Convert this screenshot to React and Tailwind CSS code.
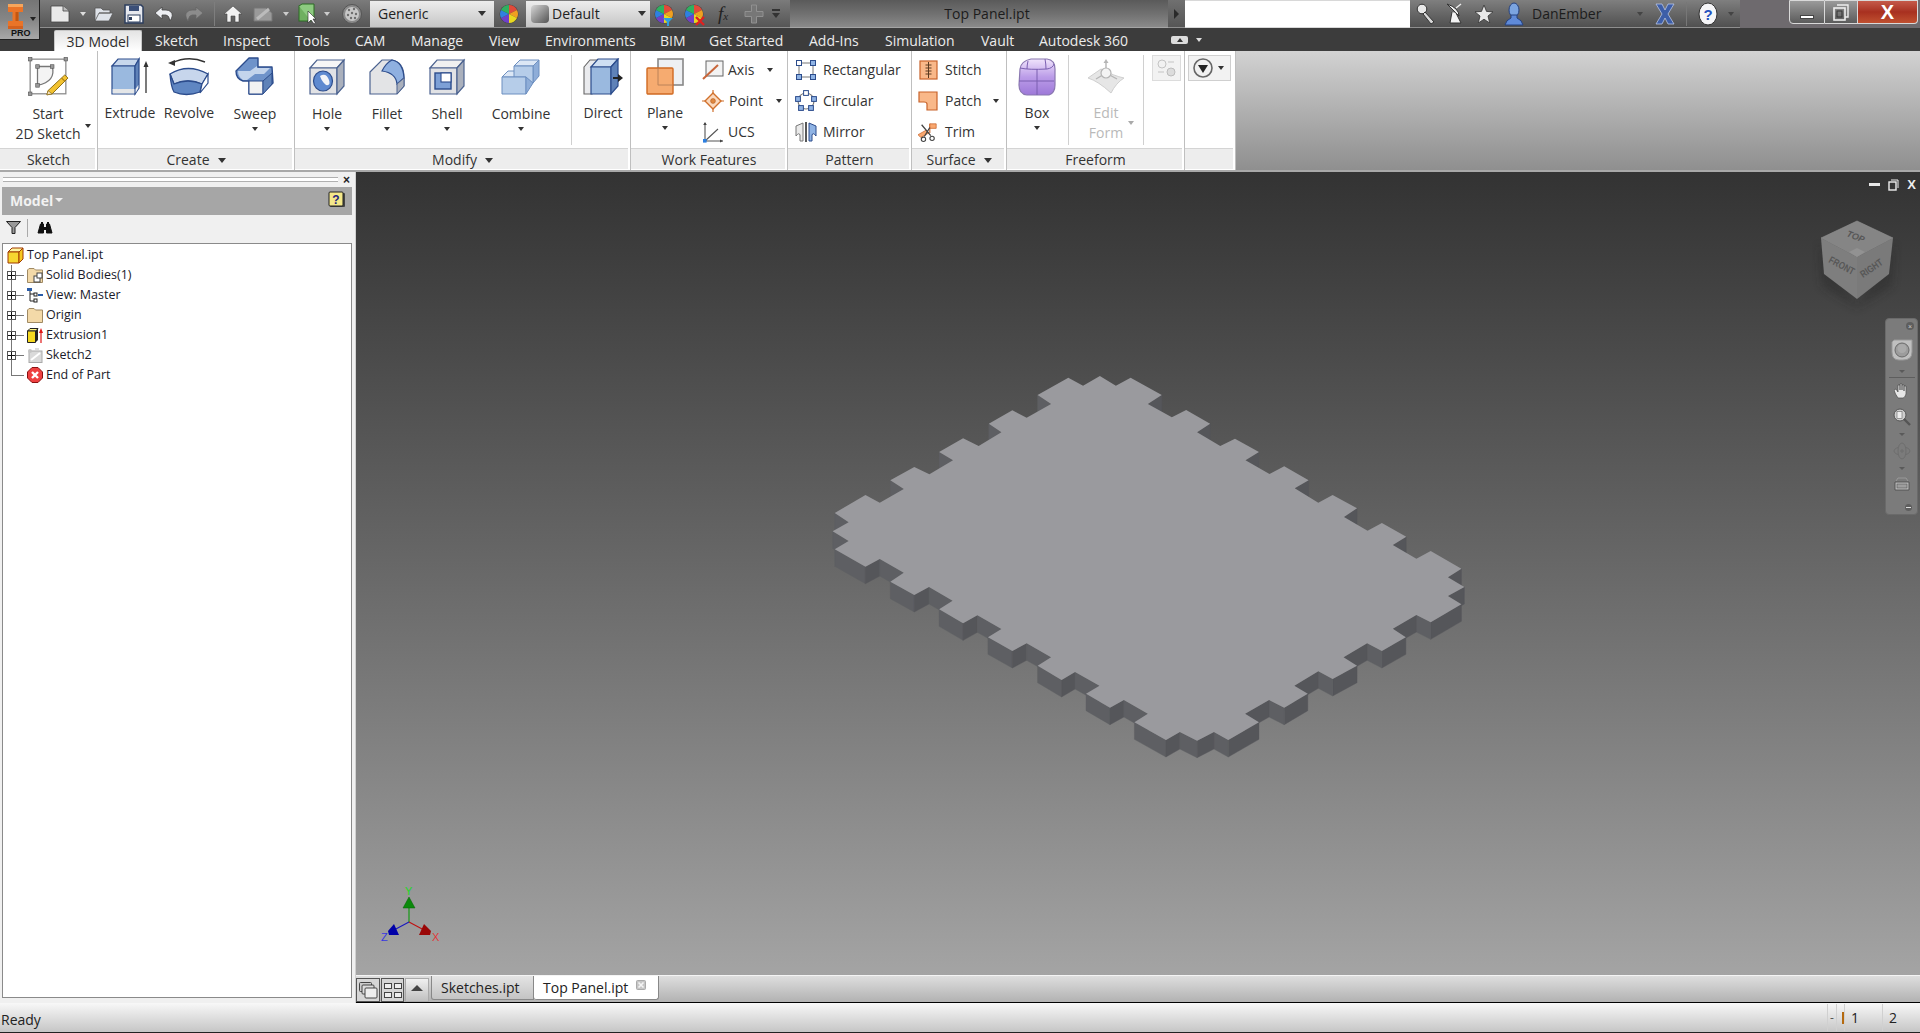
import React from 'react';

// top face of the plate, traced off the reference (660x410 crop, x scaled 2.376, y scaled 3)
const RAW = '517,105 590,53 625,77 665,48 703,77 738,53 812,105 779,132 836,172 870,150 927,191 896,217 951,258 986,236 1043,276 1011,301 1068,342 1103,319 1161,361 1128,385 1184,428 1218,405 1276,445 1245,471 1301,512 1335,489 1393,530 1361,555 1417,596 1451,573 1524,626 1492,652 1531,681 1492,708 1524,733 1451,787 1417,765 1361,806 1392,832 1335,873 1300,850 1244,892 1276,917 1218,957 1184,934 1127,977 1159,1001 1103,1043 1067,1020 1010,1061 1043,1087 970,1140 936,1116 896,1142 855,1116 822,1140 747,1087 779,1061 722,1020 689,1043 632,1001 664,977 606,936 574,960 517,917 549,892 491,850 457,873 399,832 431,807 374,766 340,790 283,748 315,722 259,681 224,705 167,665 199,638 142,597 108,620 35,568 68,543 30,514 68,487 35,459 108,405 142,428 199,387 167,361 224,321 260,343 316,301 283,276 340,235 377,258 431,217 401,191 457,151 491,173 549,132';
const PLATE = RAW.split(' ').map((p) => {
  const [x, y] = p.split(',').map(Number);
  return [x / 2.376, y / 3];
});
const DEPTH = 17;

function Plate() {
  const walls = [];
  PLATE.forEach((p, i) => {
    const q = PLATE[(i + 1) % PLATE.length];
    if (q[0] < p[0]) walls.push({ p, q, my: (p[1] + q[1]) / 2, fill: q[1] > p[1] ? '#55565a' : '#5e5f63' });
  });
  walls.sort((a, b) => a.my - b.my);
  return (
    <svg width="660" height="410" className="absolute left-[464px] top-[188px]">
      {walls.map((w, i) => (
        <polygon
          key={i}
          fill={w.fill}
          stroke={w.fill}
          strokeWidth="0.4"
          points={`${w.p[0]},${w.p[1]} ${w.q[0]},${w.q[1]} ${w.q[0]},${w.q[1] + DEPTH} ${w.p[0]},${w.p[1] + DEPTH}`}
        />
      ))}
      <polygon fill="#9a9a9e" points={PLATE.map((p) => p.join(',')).join(' ')} />
    </svg>
  );
}

const Chev = ({ className = '', color = 'border-t-[#333]' }) => (
  <span className={`inline-block w-0 h-0 border-x-[3.5px] border-x-transparent border-t-[4px] ${color} ${className}`} />
);

const OUT = '#2c4c8c';

const SketchIcon = () => (
  <svg width="42" height="42" viewBox="0 0 40 40">
    <rect x="3" y="3" width="34" height="33" fill="none" stroke="#8a8a8a" strokeWidth="1.2" />
    <path d="M10 10H24Q28 24 10 28Z" fill="#f4f4f4" stroke="#777" strokeWidth="1.2" />
    {[[3, 3], [37, 3], [3, 36], [10, 10], [24, 10], [10, 28]].map(([x, y], i) => (
      <rect key={i} x={x - 1.7} y={y - 1.7} width="3.4" height="3.4" fill="#999" stroke="#555" strokeWidth=".6" />
    ))}
    <path d="M20 33l16-15 3 3-15 15-5 1z" fill="#f2c230" stroke="#8a6a10" strokeWidth=".9" />
    <path d="M20 33l-1 4 5-1z" fill="#f6e2c0" stroke="#8a6a10" strokeWidth=".6" />
    <path d="M33 21l3 3" stroke="#a87a10" strokeWidth="1" />
  </svg>
);
const ExtrudeIcon = () => (
  <svg width="40" height="40" viewBox="0 0 40 40">
    <path d="M2 9L8 2H29L25 9Z" fill="#c7d7ec" stroke={OUT} strokeWidth="1.2" />
    <path d="M2 9H25V37H2Z" fill="#9ab9df" stroke={OUT} strokeWidth="1.2" />
    <path d="M25 9L29 2V31L25 37Z" fill="#5f82b8" stroke={OUT} strokeWidth="1.2" />
    <path d="M2.6 32H24.4V36.4H2.6Z" fill="#e4e6e8" />
    <path d="M25.6 32L28.4 28V31L25.6 36Z" fill="#f2f2f2" />
    <path d="M36 36V6" stroke="#333" strokeWidth="1.3" />
    <path d="M33.5 10L36 4L38.5 10Z" fill="#333" />
  </svg>
);
const RevolveIcon = () => (
  <svg width="42" height="40" viewBox="0 0 42 40">
    <path d="M4 6Q20 -2 37 5" fill="none" stroke="#333" strokeWidth="1.4" />
    <path d="M0 6L7 3V9Z" fill="#333" />
    <path d="M2 17Q20 6 40 17L34 27Q20 21 6 27Z" fill="#c7d6ec" stroke={OUT} strokeWidth="1.3" />
    <path d="M2 17Q3 30 6 35Q18 40 32 35L34 27Q20 21 6 27Z" fill="#5f86c2" stroke={OUT} strokeWidth="1.3" />
    <path d="M34 27L40 17V26L32 36Z" fill="#fff" stroke={OUT} strokeWidth="1.2" />
  </svg>
);
const SweepIcon = () => (
  <svg width="40" height="40" viewBox="0 0 40 40">
    <path d="M1 14L14 1H23V10H37L38 26L27 37H14V24H8Q1 22 1 14Z" fill="#6f93ca" stroke={OUT} strokeWidth="1.4" strokeLinejoin="round" />
    <path d="M3 14H15L22 9V11H35L29 17H20L12 23H8Q3 20 3 14Z" fill="#c3d4ec" />
    <path d="M14 24H28V37H14Z" fill="#f2f2f2" stroke={OUT} strokeWidth="1" />
    <path d="M28 24L37 16V27L28 37Z" fill="#5f82b8" stroke={OUT} strokeWidth="1" />
  </svg>
);
const HoleIcon = () => (
  <svg width="38" height="38" viewBox="0 0 38 38">
    <path d="M2 10L9 2H36L29 10Z" fill="#f6f6f6" stroke="#4c6390" strokeWidth="1.2" />
    <path d="M2 10H29V36H2Z" fill="#e1e2e5" stroke="#4c6390" strokeWidth="1.2" />
    <path d="M29 10L36 2V28L29 36Z" fill="#aab0bc" stroke="#4c6390" strokeWidth="1.2" />
    <ellipse cx="15" cy="23" rx="9.5" ry="10" fill="#5f8ad0" stroke={OUT} strokeWidth="1.2" />
    <path d="M12 18Q18 14 21 22Q23 28 18 27Q14 24 12 18Z" fill="#f2f4f8" />
  </svg>
);
const FilletIcon = () => (
  <svg width="38" height="38" viewBox="0 0 38 38">
    <path d="M2 14L14 2H24Q36 4 36 20V28L29 36H2Z" fill="#e3e4e6" stroke="#4c6390" strokeWidth="1.2" />
    <path d="M14 13Q18 5 24 2Q35 4 36 20L29 26Q28 15 14 13Z" fill="#8fb0e0" stroke={OUT} strokeWidth="1.2" />
    <path d="M29 26L36 20V28L29 36Z" fill="#aab0bc" stroke="#4c6390" strokeWidth="1" />
  </svg>
);
const ShellIcon = () => (
  <svg width="38" height="38" viewBox="0 0 38 38">
    <path d="M2 10L9 2H36L29 10Z" fill="#f0f0f0" stroke="#4c6390" strokeWidth="1.2" />
    <path d="M2 10H29V36H2Z" fill="#e1e2e5" stroke="#4c6390" strokeWidth="1.2" />
    <path d="M29 10L36 2V28L29 36Z" fill="#aab0bc" stroke="#4c6390" strokeWidth="1.2" />
    <rect x="7" y="15" width="16" height="16" fill="#7da0d6" stroke={OUT} strokeWidth="1.4" />
    <rect x="13" y="15" width="10" height="9" fill="#fff" stroke={OUT} strokeWidth="1.1" />
  </svg>
);
const CombineIcon = () => (
  <svg width="40" height="40" viewBox="0 0 40 40">
    <path d="M13 9L19 3H38L32 9Z" fill="#dce7f5" stroke="#6d8fc0" strokeWidth="1" />
    <path d="M32 9L38 3V19L32 26Z" fill="#8eadd8" stroke="#6d8fc0" strokeWidth="1" />
    <path d="M1 20L7 14H25V20Z" fill="#dce7f5" stroke="#6d8fc0" strokeWidth="1" />
    <path d="M13 9H32V26L25 30V20H13Z" fill="#b6cde9" stroke="#6d8fc0" strokeWidth="1" />
    <path d="M1 20H25V37H1Z" fill="#b6cde9" stroke="#6d8fc0" strokeWidth="1" />
    <path d="M25 20L32 26L25 37Z" fill="#8eadd8" stroke="#6d8fc0" strokeWidth="1" />
  </svg>
);
const DirectIcon = () => (
  <svg width="40" height="38" viewBox="0 0 40 38">
    <path d="M1 9L7 2H15L9 9V36H1Z" fill="#eaebee" stroke="#666" strokeWidth="1.1" />
    <path d="M8 9L15 1H35L28 9Z" fill="#cfdff2" stroke={OUT} strokeWidth="1.2" />
    <path d="M8 9H28V36H8Z" fill="#9ab9df" stroke={OUT} strokeWidth="1.2" />
    <path d="M28 9L35 1V28L28 36Z" fill="#5f82b8" stroke={OUT} strokeWidth="1.2" />
    <path d="M30 20H37" stroke="#222" strokeWidth="2" />
    <path d="M35 16L40 20L35 24Z" fill="#222" />
  </svg>
);
const PlaneIcon = () => (
  <svg width="40" height="38" viewBox="0 0 40 38">
    <rect x="13" y="1" width="25" height="26" fill="#eef0f3" stroke="#888" strokeWidth="1.6" />
    <rect x="2" y="10" width="26" height="26" rx="1" fill="#f6a668" fillOpacity=".95" stroke="#d06a22" strokeWidth="1.4" />
    <path d="M13 10V27H28" fill="none" stroke="#b5815a" strokeWidth=".8" />
  </svg>
);
const AxisIcon = () => (
  <svg width="22" height="22" viewBox="0 0 22 22">
    <rect x="4" y="2" width="17" height="15" fill="#f3f3f3" stroke="#666" />
    <path d="M1 20L16 6" stroke="#c8663a" strokeWidth="2" />
  </svg>
);
const PointIcon = () => (
  <svg width="22" height="22" viewBox="0 0 22 22">
    <path d="M11 3L19 11L11 19L3 11Z" fill="#fbd9bd" stroke="#d0702c" strokeWidth="1.4" />
    <circle cx="11" cy="11" r="2.4" fill="#e08840" stroke="#b05a20" strokeWidth=".6" />
    <path d="M11 0V4M11 18V22M0 11H4M18 11H22" stroke="#d0702c" strokeWidth="1.2" />
  </svg>
);
const UcsIcon = () => (
  <svg width="22" height="22" viewBox="0 0 22 22">
    <path d="M3 20V2M3 20H21M3 20L16 8" stroke="#555" strokeWidth="1.1" fill="none" />
    <path d="M1.2 4L3 1L4.8 4Z" fill="#444" />
    <path d="M18 18.4L21 20L18 21.6Z" fill="#444" />
    <rect x="1" y="18" width="3.6" height="3.6" fill="#2c7fe0" />
  </svg>
);
const RectIcon = () => (
  <svg width="22" height="22" viewBox="0 0 22 22">
    <path d="M4 4H18V18H4Z" fill="none" stroke="#777" />
    <rect x="1.5" y="1.5" width="5" height="5" fill="#fff" stroke="#2c4c8c" />
    <rect x="15.5" y="1.5" width="5" height="5" fill="#8fb3e4" stroke="#2c4c8c" />
    <rect x="1.5" y="15.5" width="5" height="5" fill="#8fb3e4" stroke="#2c4c8c" />
    <rect x="15.5" y="15.5" width="5" height="5" fill="#8fb3e4" stroke="#2c4c8c" />
  </svg>
);
const CircIcon = () => (
  <svg width="22" height="22" viewBox="0 0 22 22">
    <circle cx="11" cy="11" r="8" fill="none" stroke="#777" strokeWidth="1.2" />
    {[[11, 3], [3, 9], [19, 9], [6, 18], [16, 18]].map(([x, y], i) => (
      <rect key={i} x={x - 2.4} y={y - 2.4} width="4.8" height="4.8" fill={i === 0 ? '#fff' : '#8fb3e4'} stroke="#2c4c8c" />
    ))}
  </svg>
);
const MirrorIcon = () => (
  <svg width="22" height="22" viewBox="0 0 22 22">
    <path d="M1 5L8 2V20H5V14Q4 11 1 15Z" fill="#eaeaea" stroke="#777" />
    <path d="M21 5L14 2V20H17V14Q18 11 21 15Z" fill="#8fb3e4" stroke="#2c4c8c" />
    <path d="M11 1V21" stroke="#111" strokeWidth="1.4" />
  </svg>
);
const StitchIcon = () => (
  <svg width="19" height="20" viewBox="0 0 19 20">
    <rect x="1" y="1" width="17" height="18" fill="#f9b889" stroke="#c8632a" strokeWidth="1.2" />
    <path d="M9.5 2V18M6.5 5H12.5M6.5 8H12.5M6.5 11H12.5M6.5 14H12.5" stroke="#5a3a20" strokeWidth="1" />
  </svg>
);
const PatchIcon = () => (
  <svg width="20" height="20" viewBox="0 0 20 20">
    <path d="M1 1H19V19H9V13Q9 11 6 11H1Z" fill="#f9b889" stroke="#c8632a" strokeWidth="1.2" />
  </svg>
);
const TrimIcon = () => (
  <svg width="22" height="22" viewBox="0 0 22 22">
    <path d="M13 2V12" stroke="#c8632a" strokeWidth="1.2" />
    <path d="M13 2H20V7H13Z" fill="#f9a870" stroke="#c8632a" strokeWidth=".8" />
    <path d="M0 14L9 9L12 12L3 17Z" fill="#f9a870" stroke="#c8632a" strokeWidth=".8" />
    <path d="M4 3L14 15M13 6L7 16" stroke="#444" strokeWidth="1.4" />
    <circle cx="6" cy="19" r="2.4" fill="none" stroke="#444" strokeWidth="1.2" />
    <circle cx="15.5" cy="18" r="2.4" fill="none" stroke="#444" strokeWidth="1.2" />
  </svg>
);
const BoxIcon = () => (
  <svg width="40" height="40" viewBox="0 0 40 40">
    <defs>
      <linearGradient id="boxg" x1="0" y1="0" x2="0" y2="1">
        <stop offset="0" stopColor="#f0e4fc" />
        <stop offset=".5" stopColor="#bb9ce8" />
        <stop offset="1" stopColor="#9d78d8" />
      </linearGradient>
    </defs>
    <path d="M3 12Q4 4 14 2H30Q38 3 38 12V28Q38 36 32 38H10Q2 37 2 28Z" fill="url(#boxg)" stroke="#8a78b0" strokeWidth="1.2" />
    <path d="M3 11Q12 13 30 12Q36 11 37 7M2 24H37M20 12V38M11 4Q10 8 10 12M28 2Q29 7 29 12" fill="none" stroke="#7a5fb0" strokeWidth="1" />
  </svg>
);
const EditFormIcon = () => (
  <svg width="40" height="36" viewBox="0 0 40 36">
    <path d="M2 19L15 10Q28 17 38 19Q30 24 25 34Q12 22 2 19Z" fill="#e6e6e6" stroke="#cfcfcf" />
    <path d="M20 2V14M20 14L10 20M20 14L31 20" stroke="#b5b5b5" strokeWidth="1.4" />
    <circle cx="20" cy="14" r="5" fill="#f4f4f4" stroke="#b5b5b5" strokeWidth="1.2" />
    <path d="M17.5 4L20 0L22.5 4Z" fill="#b5b5b5" />
  </svg>
);

const Big = ({ w, icon, lines, chev, gray, down }) => (
  <div className={`${w} shrink-0 flex flex-col items-center pt-[6px]`}>
    <div className="h-[40px] flex items-center justify-center">{icon}</div>
    <div className={`${down ? 'mt-[7px]' : 'mt-[6px]'} flex flex-col items-center leading-[20px] ${gray ? 'text-[#b9b9b9]' : 'text-[#333]'}`}>
      {lines.map((l) => (
        <span key={l} className="whitespace-nowrap">{l}</span>
      ))}
    </div>
    {chev && <Chev className="mt-[3px]" />}
  </div>
);

const Small = ({ icon, label, iw, gap, chev, chevClass = '' }) => (
  <div className="h-[31px] flex items-center">
    <span className={`${iw} shrink-0 flex items-center justify-center`}>{icon}</span>
    <span className={`${gap} whitespace-nowrap text-[#333]`}>{label}</span>
    {chev && <Chev className={chevClass} />}
  </div>
);

const Panel = ({ w, title, chev, children }) => (
  <div className={`${w} h-[119px] flex flex-col border-r border-[#bfbfbf] bg-white`}>
    <div className="h-[97px] flex">{children}</div>
    <div className="h-[21px] mr-[2px] pl-[2px] pt-[2px] bg-[#ededed] border-t border-[#d4d4d4] flex items-center justify-center leading-none text-[#333]">
      {title && <span>{title}</span>}
      {chev && <Chev className="ml-[8px] border-x-[4.5px] border-t-[5px]" />}
    </div>
  </div>
);

const Sep = ({ className = '' }) => <div className={`w-px h-[90px] mt-[4px] bg-[#d0d0d0] shrink-0 ${className}`} />;

const Ribbon = () => (
  <div className="h-[121px] flex border-b-2 border-[#a8a8a8] text-[14px]">
    <Panel w="w-[98px]" title="Sketch">
      <div className="relative">
        <Big w="w-[96px]" icon={<SketchIcon />} lines={['Start', '2D Sketch']} down />
        <Chev className="absolute left-[85px] top-[73px]" />
      </div>
    </Panel>
    <Panel w="w-[197px]" title="Create" chev>
      <Big w="w-[64px]" icon={<ExtrudeIcon />} lines={['Extrude']} />
      <Big w="w-[54px]" icon={<RevolveIcon />} lines={['Revolve']} />
      <Big w="w-[78px]" icon={<SweepIcon />} lines={['Sweep']} chev down />
    </Panel>
    <Panel w="w-[336px]" title="Modify" chev>
      <Big w="w-[64px]" icon={<HoleIcon />} lines={['Hole']} chev down />
      <Big w="w-[56px]" icon={<FilletIcon />} lines={['Fillet']} chev down />
      <Big w="w-[64px]" icon={<ShellIcon />} lines={['Shell']} chev down />
      <Big w="w-[84px]" icon={<CombineIcon />} lines={['Combine']} chev down />
      <Sep className="ml-[8px]" />
      <div className="pl-[4px]">
        <Big w="w-[54px]" icon={<DirectIcon />} lines={['Direct']} />
      </div>
    </Panel>
    <Panel w="w-[157px]" title="Work Features">
      <Big w="w-[68px]" icon={<PlaneIcon />} lines={['Plane']} chev />
      <div className="ml-[3px] pt-[3px] flex flex-col">
        <Small icon={<AxisIcon />} label="Axis" iw="w-[22px]" gap="ml-[4px]" chev chevClass="ml-[13px]" />
        <Small icon={<PointIcon />} label="Point" iw="w-[22px]" gap="ml-[5px]" chev chevClass="ml-[13px]" />
        <Small icon={<UcsIcon />} label="UCS" iw="w-[22px]" gap="ml-[4px]" />
      </div>
    </Panel>
    <Panel w="w-[124px]" title="Pattern">
      <div className="ml-[7px] pt-[3px] flex flex-col">
        <Small icon={<RectIcon />} label="Rectangular" iw="w-[22px]" gap="ml-[6px]" />
        <Small icon={<CircIcon />} label="Circular" iw="w-[22px]" gap="ml-[6px]" />
        <Small icon={<MirrorIcon />} label="Mirror" iw="w-[22px]" gap="ml-[6px]" />
      </div>
    </Panel>
    <Panel w="w-[95px]" title="Surface" chev>
      <div className="ml-[6px] pt-[3px] flex flex-col">
        <Small icon={<StitchIcon />} label="Stitch" iw="w-[20px]" gap="ml-[7px]" />
        <Small icon={<PatchIcon />} label="Patch" iw="w-[20px]" gap="ml-[7px]" chev chevClass="ml-[12px]" />
        <Small icon={<TrimIcon />} label="Trim" iw="w-[20px]" gap="ml-[7px]" />
      </div>
    </Panel>
    <Panel w="w-[178px]" title="Freeform">
      <Big w="w-[60px]" icon={<BoxIcon />} lines={['Box']} chev />
      <Sep className="ml-[1px]" />
      <div className="relative">
        <Big w="w-[74px]" icon={<EditFormIcon />} lines={['Edit', 'Form']} gray />
        <Chev className="absolute left-[59px] top-[70px]" color="border-t-[#aaa]" />
      </div>
      <Sep />
      <div className="ml-[8px] mt-[4px] w-[29px] h-[26px] border border-[#dcdcdc] bg-[#f2f2f2] flex items-center justify-center">
        <svg width="21" height="18" viewBox="0 0 21 18">
          <ellipse cx="6" cy="5" rx="4" ry="4" fill="none" stroke="#c4c4c4" />
          <ellipse cx="15" cy="13" rx="4" ry="4" fill="#dcdcdc" stroke="#bcbcbc" />
          <path d="M12 3H18M2 13H8" stroke="#c4c4c4" />
        </svg>
      </div>
    </Panel>
    <Panel w="w-[51px]">
      <div className="ml-[3px] mt-[4px] w-[43px] h-[26px] border border-[#cfcfcf] bg-[#f2f2f2] flex items-center">
        <svg width="22" height="22" viewBox="0 0 22 22" className="ml-[3px]">
          <circle cx="11" cy="11" r="9" fill="#f0f0f0" stroke="#666" strokeWidth="1.6" />
          <path d="M6 8H16L11 16Z" fill="#222" />
        </svg>
        <Chev className="ml-[4px]" />
      </div>
    </Panel>
    <div className="flex-1 bg-gradient-to-b from-[#d2d2d2] to-[#8f8f8f]" />
  </div>
);

const Doc = () => (
  <svg width="20" height="18" viewBox="0 0 20 18" className="ml-[10px]">
    <path d="M1 1H13L19 6V17H1Z" fill="#e9e9e9" stroke="#444" strokeWidth=".8" />
    <path d="M13 1V6H19" fill="#bbb" stroke="#444" strokeWidth=".8" />
  </svg>
);

const QuickAccess = () => (
  <div className="w-[790px] h-[28px] pl-[40px] flex items-center bg-gradient-to-b from-[#7b7b7b] to-[#565656] border-b border-[#8e8e8e] shrink-0">
    <Doc />
    <Chev className="ml-[10px]" color="border-t-[#ddd]" />
    <svg width="20" height="16" viewBox="0 0 20 16" className="ml-[8px]">
      <path d="M1 15V2H7L9 4H16V7H5L1 15H15L19 7H5" fill="#dfe3ea" stroke="#555" strokeWidth=".8" />
    </svg>
    <svg width="20" height="20" viewBox="0 0 20 20" className="ml-[10px]">
      <path d="M1 1H17L19 3V19H1Z" fill="#e6e8ee" stroke="#2d3e5e" strokeWidth="1.5" />
      <rect x="5" y="2" width="10" height="5" fill="#3b4f78" />
      <rect x="4" y="11" width="12" height="7" fill="#fff" stroke="#2d3e5e" />
      <rect x="5" y="13" width="3" height="3" fill="#2d3e5e" />
    </svg>
    <svg width="20" height="16" viewBox="0 0 20 16" className="ml-[10px]">
      <path d="M8 1L1 7L8 13V9H12Q15 9 16 15Q20 9 17 6Q15 4 12 4H8Z" fill="#eceef2" stroke="#444" strokeWidth=".8" />
    </svg>
    <svg width="19" height="16" viewBox="0 0 19 16" className="ml-[11px]">
      <path d="M11 1L18 7L11 13V9H7Q4 9 3 15Q-1 9 2 6Q4 4 7 4H11Z" fill="#8c8c8c" stroke="#666" strokeWidth=".8" />
    </svg>
    <div className="ml-[10px] w-px h-[24px] bg-[#7e7e7e]" />
    <svg width="18" height="18" viewBox="0 0 18 18" className="ml-[9px]">
      <path d="M9 1L18 9H15V17H11V11H7V17H3V9H0Z" fill="#f2f2f2" stroke="#444" strokeWidth=".6" />
    </svg>
    <svg width="20" height="18" viewBox="0 0 20 18" className="ml-[11px]">
      <path d="M1 3H13L19 8V16H1Z" fill="#9a9a9a" stroke="#777" />
      <path d="M4 14L16 4" stroke="#bbb" strokeWidth="3" />
    </svg>
    <Chev className="ml-[10px]" color="border-t-[#ccc]" />
    <svg width="18" height="22" viewBox="0 0 18 22" className="ml-[9px]">
      <rect x="1" y="3" width="12" height="15" fill="#6fb060" stroke="#2c6a24" />
      <path d="M1 3L4 1H16V15L13 18" fill="#8dca80" stroke="#2c6a24" />
      <path d="M10 8V20L13 17L16 21L17.5 20L15 16H18Z" fill="#fff" stroke="#222" strokeWidth=".6" />
    </svg>
    <Chev className="ml-[8px]" color="border-t-[#ccc]" />
    <svg width="20" height="20" viewBox="0 0 20 20" className="ml-[12px]">
      <circle cx="10" cy="10" r="9.5" fill="#8a8a8a" stroke="#555" />
      <circle cx="10" cy="10" r="7" fill="#c8c8c8" />
      {[[7, 6], [12, 5], [14, 10], [6, 11], [10, 9], [9, 14], [13, 14]].map(([x, y], i) => (
        <circle key={i} cx={x} cy={y} r="1.2" fill="#6e6e6e" />
      ))}
    </svg>
    <div className="ml-[8px] w-[124px] h-[26px] px-[8px] flex items-center justify-between bg-gradient-to-b from-[#ededed] to-[#c6c6c6] text-[14px] text-[#222]">
      <span>Generic</span>
      <Chev className="border-x-[4px] border-t-[5px]" />
    </div>
    <ColorWheel cls="ml-[5px]" />
    <div className="ml-[7px] w-[124px] h-[26px] pl-[5px] pr-[4px] flex items-center bg-gradient-to-b from-[#ededed] to-[#c6c6c6] text-[14px] text-[#222]">
      <span className="w-[18px] h-[18px] rounded-sm bg-gradient-to-br from-[#d8d8d8] to-[#555] mr-[3px]" />
      <span className="flex-1">Default</span>
      <Chev className="border-x-[4px] border-t-[5px]" />
    </div>
    <span className="relative ml-[4px]">
      <ColorWheel />
      <svg width="10" height="8" viewBox="0 0 10 8" className="absolute left-[9px] top-[14px]">
        <path d="M0 0H10L6 4V8H4V4Z" fill="#2f9de0" />
      </svg>
    </span>
    <span className="relative ml-[10px]">
      <ColorWheel />
      <svg width="10" height="10" viewBox="0 0 10 10" className="absolute left-[11px] top-[12px]">
        <path d="M1 1L9 9M9 1L1 9" stroke="#e02020" strokeWidth="2.4" />
      </svg>
    </span>
    <span className="ml-[14px] w-[16px] font-['Liberation_Serif',serif] italic text-[19px] leading-none text-[#222]">
      f<span className="text-[11px]">x</span>
    </span>
    <svg width="20" height="20" viewBox="0 0 20 20" className="ml-[10px]">
      <path d="M7.5 1H12.5V7.5H19V12.5H12.5V19H7.5V12.5H1V7.5H7.5Z" fill="#777" stroke="#919191" />
    </svg>
    <div className="ml-[8px] flex flex-col items-center gap-[2px]">
      <span className="w-[8px] h-[2px] bg-[#333]" />
      <Chev className="border-x-[4px] border-t-[5px]" />
    </div>
  </div>
);

const ColorWheel = ({ cls = '' }) => (
  <svg width="20" height="20" viewBox="0 0 20 20" className={`block ${cls}`}>
    <circle cx="10" cy="10" r="9.5" fill="#444" />
    <path d="M10 10V1A9 9 0 0 1 18 6Z" fill="#e04a3a" />
    <path d="M10 10L18 6A9 9 0 0 1 18 14Z" fill="#f0a020" />
    <path d="M10 10L18 14A9 9 0 0 1 10 19Z" fill="#e8d820" />
    <path d="M10 10V19A9 9 0 0 1 2 14Z" fill="#7040c8" />
    <path d="M10 10L2 14A9 9 0 0 1 2 6Z" fill="#2f80e0" />
    <path d="M10 10L2 6A9 9 0 0 1 10 1Z" fill="#30b060" />
  </svg>
);

const InfoIcons = () => (
  <div className="w-[330px] h-[28px] flex items-center bg-gradient-to-b from-[#7f7f7f] to-[#505050] border-b border-[#8e8e8e] shrink-0">
    <svg width="20" height="22" viewBox="0 0 20 22" className="ml-[6px]">
      <circle cx="6" cy="6" r="4.8" fill="#e8e8e8" stroke="#333" />
      <path d="M9 9L18 19L15 21L7 11Z" fill="#d8d8d8" stroke="#333" />
    </svg>
    <svg width="18" height="24" viewBox="0 0 18 24" className="ml-[9px]">
      <path d="M2 2Q14 6 14 14Z" fill="#eee" stroke="#333" />
      <path d="M7 10L5 21H16L11 11" fill="#f2f2f2" stroke="#333" />
      <path d="M11 6L16 2" stroke="#eee" strokeWidth="1.4" />
    </svg>
    <svg width="18" height="18" viewBox="0 0 18 18" className="ml-[12px]">
      <path d="M9 0L11.5 6.4L18 6.9L13 11L14.7 18L9 14.2L3.3 18L5 11L0 6.9L6.5 6.4Z" fill="#e8e8e8" stroke="#333" strokeWidth=".8" />
    </svg>
    <svg width="20" height="24" viewBox="0 0 20 24" className="ml-[11px]">
      <ellipse cx="10" cy="8" rx="5" ry="7" fill="#7ba4e0" stroke="#24407e" />
      <path d="M7 13V16Q2 18 1 23H19Q18 18 13 16V13Z" fill="#5f8ad8" stroke="#24407e" />
    </svg>
    <span className="ml-[8px] w-[70px] text-[14px] text-[#1c1c1c]">DanEmber</span>
    <Chev className="ml-[35px]" color="border-t-[#444]" />
    <svg width="20" height="22" viewBox="0 0 20 22" className="ml-[12px]">
      <path d="M1 1H7L10 7L13 1H19L13 11L19 21H13L10 15L7 21H1L7 11Z" fill="#3d5ea8" stroke="#b7c4e4" strokeWidth=".8" />
    </svg>
    <div className="ml-[11px] w-px h-[24px] bg-[#777]" />
    <svg width="20" height="24" viewBox="0 0 20 24" className="ml-[11px]">
      <ellipse cx="10" cy="12" rx="9" ry="11" fill="#f6f6f8" stroke="#333" />
      <text x="10" y="17.5" textAnchor="middle" fontSize="15" fontWeight="700" fill="#2552c0" fontFamily="Liberation Sans">?</text>
    </svg>
    <Chev className="ml-[10px]" color="border-t-[#444]" />
  </div>
);

const WindowButtons = () => (
  <div className="flex-1 h-[28px] pl-[49px] flex items-start bg-[#6e6a6e]">
    <div className="w-[36px] h-[24px] border border-[#d9d9d9] rounded-bl-[4px] flex items-center justify-center bg-gradient-to-b from-[#9a9a9a] to-[#5c5c5c]">
      <span className="w-[14px] h-[4px] mt-[9px] bg-white border border-[#444]" />
    </div>
    <div className="w-[33px] h-[24px] border-y border-r border-[#d9d9d9] flex items-center justify-center bg-gradient-to-b from-[#9a9a9a] to-[#5c5c5c]">
      <svg width="16" height="17" viewBox="0 0 16 17">
        <path d="M4 1H15V13H12" fill="none" stroke="#eee" strokeWidth="1.4" />
        <rect x="1" y="4" width="11" height="12" fill="none" stroke="#eee" strokeWidth="1.6" />
        <rect x="4" y="7" width="5" height="6" fill="none" stroke="#333" />
      </svg>
    </div>
    <div className="w-[60px] h-[24px] border-y border-r border-[#d9d9d9] rounded-br-[4px] flex items-center justify-center bg-gradient-to-b from-[#c45a4a] via-[#a83020] to-[#c05030]">
      <span className="font-['Liberation_Sans',sans-serif] font-bold text-[20px] leading-none text-white">X</span>
    </div>
  </div>
);

const TitleBar = () => (
  <div className="h-[28px] flex">
    <QuickAccess />
    <div className="w-[378px] h-[28px] pl-[16px] flex items-center justify-center bg-gradient-to-b from-[#5a5a5a] via-[#707070] to-[#8a8a8a] border-b border-[#a4a4a4] text-[14px] text-[#1c1c1c] shrink-0">
      Top Panel.ipt
    </div>
    <div className="w-[17px] h-[28px] flex items-center justify-center bg-gradient-to-b from-[#707070] to-[#565656] border-b border-[#8e8e8e] shrink-0">
      <span className="w-0 h-0 border-y-[5px] border-y-transparent border-l-[5px] border-l-[#2a2a2a]" />
    </div>
    <div className="w-[225px] h-[28px] pt-[1px] pb-[1px] bg-[#d8d8d8] shrink-0">
      <div className="w-full h-full bg-white" />
    </div>
    <InfoIcons />
    <WindowButtons />
  </div>
);

const TABS = [
  ['Sketch', 'ml-[13px] w-[68px]'],
  ['Inspect', 'w-[72px]'],
  ['Tools', 'w-[60px]'],
  ['CAM', 'w-[56px]'],
  ['Manage', 'w-[78px]'],
  ['View', 'w-[56px]'],
  ['Environments', 'w-[115px]'],
  ['BIM', 'w-[49px]'],
  ['Get Started', 'w-[100px]'],
  ['Add-Ins', 'w-[76px]'],
  ['Simulation', 'w-[96px]'],
  ['Vault', 'w-[58px]'],
  ['Autodesk 360', 'w-[132px]'],
];

const TabRow = () => (
  <div className="h-[23px] pl-[54px] flex bg-[#3c3c3c] text-[14px]">
    <div className="w-[88px] h-[21px] mt-[2px] pt-[1px] rounded-t-[2px] border-t border-x border-[#c8c8c8] bg-gradient-to-b from-[#e4e4e4] to-white flex items-center justify-center text-[#2c2c2c]">
      3D Model
    </div>
    {TABS.map(([name, cls]) => (
      <div key={name} className={`${cls} h-[23px] pt-[1px] flex items-center text-[#ececec] whitespace-nowrap`}>
        {name}
      </div>
    ))}
    <div className="flex items-center">
      <div className="w-[17px] h-[8px] rounded-[2px] bg-[#dcdcdc] flex items-center justify-center">
        <span className="w-0 h-0 border-x-[3.5px] border-x-transparent border-b-[4px] border-b-[#333]" />
      </div>
      <Chev className="ml-[8px]" color="border-t-[#ddd]" />
    </div>
  </div>
);

const Logo = () => (
  <div className="absolute left-0 top-0 w-[40px] h-[40px] border-r border-b border-[#222] bg-gradient-to-b from-[#757575] via-[#868686] to-[#a8a8a8] z-10">
    <svg width="17" height="25" viewBox="0 0 17 25" className="absolute left-[7px] top-[4px]">
      <path d="M1 0H16V8H11.5V17H16V25H1V17H5.5V8H1Z" fill="#ea7428" />
      <path d="M8.5 8H11.5V17H8.5Z" fill="#c4560f" />
      <path d="M1 0H16V3H1Z" fill="#f6a55c" />
      <path d="M1 22H16V25H1Z" fill="#d4611e" />
    </svg>
    <Chev className="absolute left-[30px] top-[17px]" color="border-t-[#222]" />
    <span className="absolute left-[11px] top-[28px] font-['Liberation_Sans',sans-serif] font-bold text-[9px] leading-[10px] text-[#111]">PRO</span>
  </div>
);

function FolderIcon({ link }) {
  return (
    <svg width="16" height="15" viewBox="0 0 16 15">
      <path d="M.5 14.5V2L2 .5H7L8.5 2H15.5V14.5Z" fill="#f3d9a8" stroke="#a08a64" />
      {link && (
        <g>
          <rect x="7" y="8" width="6" height="6" fill="#fff" stroke="#444" />
          <rect x="10" y="5" width="5" height="5" fill="#fff" stroke="#444" />
        </g>
      )}
    </svg>
  );
}
function ViewIcon() {
  return (
    <svg width="16" height="15" viewBox="0 0 16 15">
      <path d="M3 1V13H7M3 6H7" stroke="#222" fill="none" />
      <rect x="0" y="0" width="5" height="3" fill="#2a5ca8" />
      <rect x="7" y="5" width="3" height="3" fill="none" stroke="#222" />
      <rect x="11" y="6" width="5" height="2" fill="#2a5ca8" />
      <rect x="7" y="11" width="3" height="3" fill="none" stroke="#222" />
    </svg>
  );
}
function ExtrusionTreeIcon() {
  return (
    <svg width="16" height="15" viewBox="0 0 16 15">
      <path d="M.5 3L3 .5H11L9 3Z" fill="#fff68a" stroke="#222" />
      <path d="M.5 3H8.5V14.5H.5Z" fill="#f4d820" stroke="#222" />
      <path d="M8.5 3L11 .5V12L8.5 14.5Z" fill="#222" />
      <path d="M14 15V3" stroke="#e01818" strokeWidth="1.2" />
      <path d="M12 5L14 0L16 5Z" fill="#e01818" />
    </svg>
  );
}
function SketchTreeIcon() {
  return (
    <svg width="16" height="15" viewBox="0 0 16 15">
      <rect x="2" y="3" width="13" height="11.5" fill="#dadada" stroke="#aaa" />
      <path d="M4 12L13 5" stroke="#fff" strokeWidth="2" />
      <circle cx="3" cy="3" r="2" fill="#c4c4c4" />
      <path d="M8 1H12" stroke="#bbb" />
    </svg>
  );
}

const TREE = [
  { label: 'Solid Bodies(1)', icon: <FolderIcon link /> },
  { label: 'View: Master', icon: <ViewIcon /> },
  { label: 'Origin', icon: <FolderIcon /> },
  { label: 'Extrusion1', icon: <ExtrusionTreeIcon /> },
  { label: 'Sketch2', icon: <SketchTreeIcon /> },
];

const Plus = () => (
  <span className="absolute left-[4px] top-[6px] w-[9px] h-[9px] border border-[#555] bg-white flex items-center justify-center">
    <svg width="7" height="7" viewBox="0 0 7 7">
      <path d="M0 3.5H7M3.5 0V7" stroke="#111" />
    </svg>
  </span>
);

const ModelPanel = () => (
  <div className="w-[356px] h-full flex flex-col bg-[#f0f0f0] border-r border-[#d0d0d0] shrink-0">
    <div className="h-[15px] pl-[3px] flex items-center">
      <div className="w-[335px] h-[5px] border-y border-[#b0b0b0] bg-white" />
      <span className="ml-[5px] font-['Liberation_Sans',sans-serif] font-bold text-[12px] leading-none text-[#222]">×</span>
    </div>
    <div className="ml-[2px] w-[350px] h-[28px] pl-[8px] pr-[6px] pb-[2px] flex items-center justify-between bg-[#a6a6a6]">
      <div className="flex items-center text-[14px] font-bold text-[#f2f2f2]">
        Model
        <Chev className="ml-[2px] border-x-[4px] border-t-[4px]" color="border-t-[#f2f2f2]" />
      </div>
      <svg width="18" height="19" viewBox="0 0 18 19">
        <rect x="2" y="2" width="15" height="14" rx="1" fill="#444" />
        <rect x="1" y="1" width="14" height="14" rx="1" fill="#f4e88a" stroke="#222" />
        <text x="8" y="12.5" textAnchor="middle" fontSize="12" fontWeight="700" fill="#24247e" fontFamily="Liberation Sans">?</text>
      </svg>
    </div>
    <div className="h-[25px] mb-[3px] pl-[6px] flex items-center">
      <svg width="15" height="13" viewBox="0 0 15 13">
        <path d="M.5 .5H14.5L9 6.5V12.5H6V6.5Z" fill="#999" stroke="#222" />
      </svg>
      <div className="ml-[6px] w-px h-[18px] bg-[#aaa]" />
      <svg width="16" height="13" viewBox="0 0 16 13" className="ml-[9px]">
        <path d="M1 12L3.5 3H6.5V12ZM15 12L12.5 3H9.5V12Z" fill="#111" stroke="#111" />
        <path d="M4 1H6V3H4ZM10 1H12V3H10ZM6.5 6H9.5V9H6.5Z" fill="#111" />
      </svg>
    </div>
    <div className="ml-[2px] w-[350px] h-[755px] pt-[1px] border border-[#8a8a8a] bg-white text-[12.5px] text-[#1a1a2a]">
      <div className="h-[20px] pl-[4px] flex items-center">
        <svg width="17" height="17" viewBox="0 0 17 17">
          <path d="M1 5L5 1H16L12 5Z" fill="#fff5a0" stroke="#a03a00" />
          <path d="M1 5H12V16H1Z" fill="#f6d630" stroke="#a03a00" />
          <path d="M12 5L16 1V12L12 16Z" fill="#f6c820" stroke="#a03a00" />
        </svg>
        <span className="ml-[3px]">Top Panel.ipt</span>
      </div>
      <div className="relative">
        <div className="absolute left-[8px] top-0 h-[110px] w-px bg-[#777]" />
        {TREE.map((row) => (
          <div key={row.label} className="relative h-[20px] pl-[24px] flex items-center">
            <div className="absolute left-[8px] top-[10px] w-[13px] h-px bg-[#777]" />
            <Plus />
            {row.icon}
            <span className="ml-[3px]">{row.label}</span>
          </div>
        ))}
        <div className="relative h-[20px] pl-[24px] flex items-center">
          <div className="absolute left-[8px] top-[10px] w-[13px] h-px bg-[#777]" />
          <svg width="16" height="16" viewBox="0 0 16 16">
            <path d="M5 .5H11L15.5 5V11L11 15.5H5L.5 11V5Z" fill="#ee4040" stroke="#8a1010" />
            <path d="M5 5L11 11M11 5L5 11" stroke="#fff" strokeWidth="2.4" />
          </svg>
          <span className="ml-[3px]">End of Part</span>
        </div>
      </div>
    </div>
  </div>
);

const ViewCube = () => (
  <svg width="90" height="100" viewBox="0 0 90 100" className="absolute left-[1456px] top-[44px]">
    <defs>
      <filter id="cubeshadow" x="-30%" y="-30%" width="160%" height="160%">
        <feGaussianBlur stdDeviation="4" />
      </filter>
    </defs>
    <path d="M7 28L45 90L83 28L80 70L45 92L10 70Z" fill="#222" opacity=".35" filter="url(#cubeshadow)" />
    <path d="M45 5L81 22L45 41L9 22Z" fill="#858585" stroke="#929292" strokeWidth=".6" />
    <path d="M9 22L45 41V83L12 58Z" fill="#7e7e7e" />
    <path d="M81 22L45 41V83L77 58Z" fill="#7a7a7a" />
    <path d="M45 32L53 36L45 41L37 36Z" fill="#929292" />
    <g fill="#575757" fontFamily="Liberation Sans" fontWeight="700">
      <text fontSize="9" fontStyle="italic" transform="translate(34 20) rotate(22)">TOP</text>
      <text fontSize="10" transform="translate(16 46) rotate(28) scale(.8 1)">FRONT</text>
      <text fontSize="10" transform="translate(51 62) rotate(-34) scale(.8 1)">RIGHT</text>
    </g>
  </svg>
);

const NavBar = () => (
  <div className="absolute left-[1529px] top-[146px] w-[33px] h-[197px] rounded-[4px] border border-[#6a6a6a] bg-[#7b7b7b] flex flex-col items-center">
    <div className="w-full h-[14px] pr-[3px] flex items-center justify-end">
      <span className="w-[8px] h-[8px] rounded-full bg-[#5e5e5e] flex items-center justify-center font-['Liberation_Sans',sans-serif] text-[7px] leading-none text-[#ccc]">×</span>
    </div>
    <svg width="22" height="22" viewBox="0 0 22 22" className="mt-[6px]">
      <path d="M3 1H21V13Q21 21 12 21H8Q1 21 1 13V3Z" fill="#c0c0c0" stroke="#999" />
      <circle cx="11" cy="11" r="7" fill="#9c9c9c" stroke="#6a6a6a" />
      <circle cx="11" cy="9.5" r="4.5" fill="#aaa" />
    </svg>
    <span className="mt-[9px] w-0 h-0 border-x-[3px] border-x-transparent border-t-[3px] border-t-[#5a5a5a]" />
    <div className="mt-[4px] w-[26px] h-px bg-[#5e5e5e]" />
    <svg width="15" height="16" viewBox="0 0 15 16" className="mt-[5px]">
      <path d="M4 15Q1 11 0 7L2 6L4 9V2H6V7V1H8V7V2H10V8V3H12V11Q11 15 9 15Z" fill="#e6e6e6" stroke="#4c4c4c" strokeWidth=".7" />
    </svg>
    <svg width="18" height="18" viewBox="0 0 18 18" className="mt-[9px]">
      <circle cx="7" cy="7" r="6" fill="#cfcfcf" stroke="#555" />
      <rect x="4" y="3.5" width="5" height="7" fill="#eee" stroke="#666" strokeWidth=".6" />
      <path d="M11 11L17 17" stroke="#555" strokeWidth="2.4" />
    </svg>
    <span className="mt-[7px] w-0 h-0 border-x-[3px] border-x-transparent border-t-[3px] border-t-[#5a5a5a]" />
    <svg width="18" height="18" viewBox="0 0 18 18" className="mt-[6px]">
      <ellipse cx="9" cy="9" rx="8" ry="4" fill="none" stroke="#6e6e6e" />
      <ellipse cx="9" cy="9" rx="4" ry="8" fill="#7b7b7b" stroke="#6e6e6e" />
      <path d="M7 9H11M9 7V11" stroke="#6e6e6e" />
    </svg>
    <span className="mt-[7px] w-0 h-0 border-x-[3px] border-x-transparent border-t-[3px] border-t-[#5a5a5a]" />
    <svg width="16" height="14" viewBox="0 0 16 14" className="mt-[7px]">
      <path d="M1 5H15V13H1Z" fill="#bdbdbd" stroke="#555" />
      <rect x="3" y="7" width="10" height="4" fill="#9e9e9e" stroke="#555" strokeWidth=".6" />
      <path d="M2 4L4 1H12L14 4" fill="none" stroke="#999" />
    </svg>
    <span className="mt-auto mb-[3px] ml-auto mr-[5px] w-[7px] h-[7px] rounded-full bg-[#5e5e5e] flex items-center justify-center">
      <span className="w-[5px] h-px bg-[#ddd]" />
    </span>
  </div>
);

const Triad = () => (
  <svg width="70" height="60" viewBox="0 0 70 60" className="absolute left-[24px] top-[714px]">
    <path d="M29 36V20" stroke="#0a9a0a" strokeWidth="1.1" />
    <path d="M29 36L14 44" stroke="#1818c0" strokeWidth="1.1" />
    <path d="M29 36L44 44" stroke="#c01010" strokeWidth="1.1" />
    <path d="M29 11L23 22H35Z" fill="#0b8a0b" stroke="#066006" strokeWidth=".5" />
    <path d="M14 38L19 49H9L8 45Z" fill="#0000a8" />
    <path d="M44 38L39 49H50L51 45Z" fill="#9a0606" />
    <g fontFamily="Liberation Sans" fontSize="11">
      <text x="25" y="9" fill="#22d822">Y</text>
      <text x="1" y="55" fill="#3838e0">Z</text>
      <text x="52" y="55" fill="#e03838">X</text>
    </g>
  </svg>
);

const Viewport = () => (
  <div className="relative flex-1 h-[803px] overflow-hidden bg-gradient-to-b from-[#333333] to-[#a4a4a4]">
    <Plate />
    <ViewCube />
    <NavBar />
    <Triad />
    <div className="absolute right-[4px] top-[6px] flex items-center">
      <span className="w-[11px] h-[3px] bg-[#e8e8e8]" />
      <svg width="11" height="12" viewBox="0 0 11 12" className="ml-[8px]">
        <path d="M3 1H10V9" fill="none" stroke="#eee" />
        <rect x="1" y="3" width="7" height="8" fill="none" stroke="#eee" strokeWidth="1.4" />
      </svg>
      <span className="ml-[8px] font-['Liberation_Sans',sans-serif] font-bold text-[13px] leading-none text-[#eee]">X</span>
    </div>
  </div>
);

const BottomTabs = () => (
  <div className="h-[28px] flex items-end border-t border-[#f4f4f4] border-b border-b-black bg-gradient-to-b from-[#dedede] to-[#b2b2b2] text-[14px]">
    <div className="w-[24px] h-[24px] mr-[1px] border border-[#555] bg-[#d6d6d6] flex items-center justify-center">
      <svg width="19" height="17" viewBox="0 0 19 17">
        <rect x=".5" y=".5" width="12" height="9" rx="1" fill="#ccc" stroke="#444" />
        <rect x="3" y="3" width="12" height="9" rx="1" fill="#ddd" stroke="#444" />
        <rect x="6" y="6" width="12" height="10" rx="1" fill="#eee" stroke="#444" />
      </svg>
    </div>
    <div className="w-[23px] h-[24px] mr-[1px] border border-[#555] bg-[#d6d6d6] flex items-center justify-center">
      <svg width="18" height="15" viewBox="0 0 18 15">
        {[[0, 0], [10, 0], [0, 9], [10, 9]].map(([x, y], i) => (
          <rect key={i} x={x + 0.5} y={y + 0.5} width="7" height="5" fill="#eee" stroke="#444" />
        ))}
      </svg>
    </div>
    <div className="w-[24px] h-[24px] mr-[2px] border border-[#aaa] bg-gradient-to-b from-[#f0f0f0] to-[#c0c0c0] flex justify-center pt-[6px]">
      <span className="w-0 h-0 border-x-[6px] border-x-transparent border-b-[6px] border-b-[#444]" />
    </div>
    <div className="w-[103px] h-[24px] mb-[2px] pl-[9px] flex items-center rounded-bl-[3px] border-x border-b border-[#888] bg-gradient-to-b from-[#e4e4e4] to-[#c4c4c4] text-[#222]">
      Sketches.ipt
    </div>
    <div className="w-[125px] h-[24px] mb-[2px] pl-[9px] flex items-center rounded-bl-[3px] rounded-br-[3px] border-r border-b border-[#888] bg-white text-[#222]">
      Top Panel.ipt
      <svg width="10" height="10" viewBox="0 0 10 10" className="ml-[8px] mb-[5px]">
        <rect x=".5" y=".5" width="9" height="9" rx="1" fill="#c6c6c6" stroke="#aaa" />
        <path d="M2.5 2.5L7.5 7.5M7.5 2.5L2.5 7.5" stroke="#f4f4f4" strokeWidth="1.6" />
      </svg>
    </div>
  </div>
);

const StatusBar = () => (
  <div className="h-[30px] flex items-center border-b border-[#222] bg-gradient-to-b from-[#f8f8f8] to-[#c6c6c6] text-[14px] text-[#222]">
    <span className="ml-[1px] pt-[3px]">Ready</span>
    <div className="ml-auto h-[27px] flex items-center">
      <div className="w-[9px] h-full border-l border-[#d0d0d0] flex items-center justify-center text-[12px] text-[#555]">-</div>
      <div className="w-[8px] h-full border-l border-[#d0d0d0] flex items-center justify-end">
        <span className="w-[2px] h-[12px] bg-[#b56a10]" />
      </div>
      <div className="w-[38px] h-full pl-[6px] border-l border-[#d0d0d0] flex items-center">1</div>
      <div className="w-[38px] h-full pl-[6px] border-l border-[#d0d0d0] flex items-center">2</div>
    </div>
  </div>
);

export default function App() {
  return (
    <div className="relative w-[1920px] h-[1033px] overflow-hidden bg-[#f0f0f0] font-['Open_Sans',sans-serif]">
      <Logo />
      <TitleBar />
      <TabRow />
      <Ribbon />
      <div className="h-[831px] flex">
        <ModelPanel />
        <div className="flex-1 flex flex-col">
          <Viewport />
          <BottomTabs />
        </div>
      </div>
      <div className="absolute left-0 bottom-0 w-full">
        <StatusBar />
      </div>
    </div>
  );
}
